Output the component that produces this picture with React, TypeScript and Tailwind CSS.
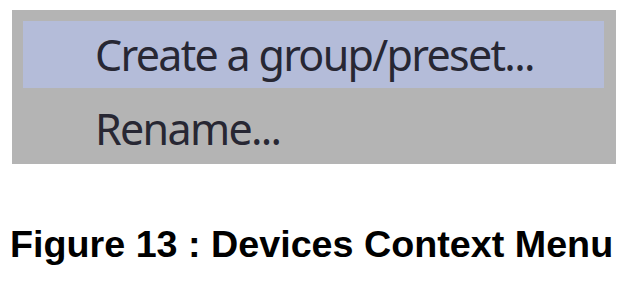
export default function App() {
  return (
    <div className="w-[629px] h-[285px] bg-white overflow-hidden">
      {/* context menu */}
      <div className="ml-[12px] mt-[10px] w-[604px] h-[154px] bg-[#b4b4b4] pt-[11px] font-['Noto_Sans',sans-serif] text-[43px] leading-none tracking-[-1.7px] text-[#272733]">
        <div className="ml-[11px] mr-[12px] h-[67px] bg-[#b4bcd9] flex items-center pl-[72px]">
          Create a group/preset...
        </div>
        <div className="h-[76px] flex items-center pl-[83px] pt-[4px]">Rename...</div>
      </div>

      {/* caption */}
      <div className="mt-[62px] ml-[10px] font-['Liberation_Sans',Arial,sans-serif] font-bold text-[37.7px] leading-none text-black whitespace-nowrap">
        Figure 13 : Devices Context Menu
      </div>
    </div>
  );
}
